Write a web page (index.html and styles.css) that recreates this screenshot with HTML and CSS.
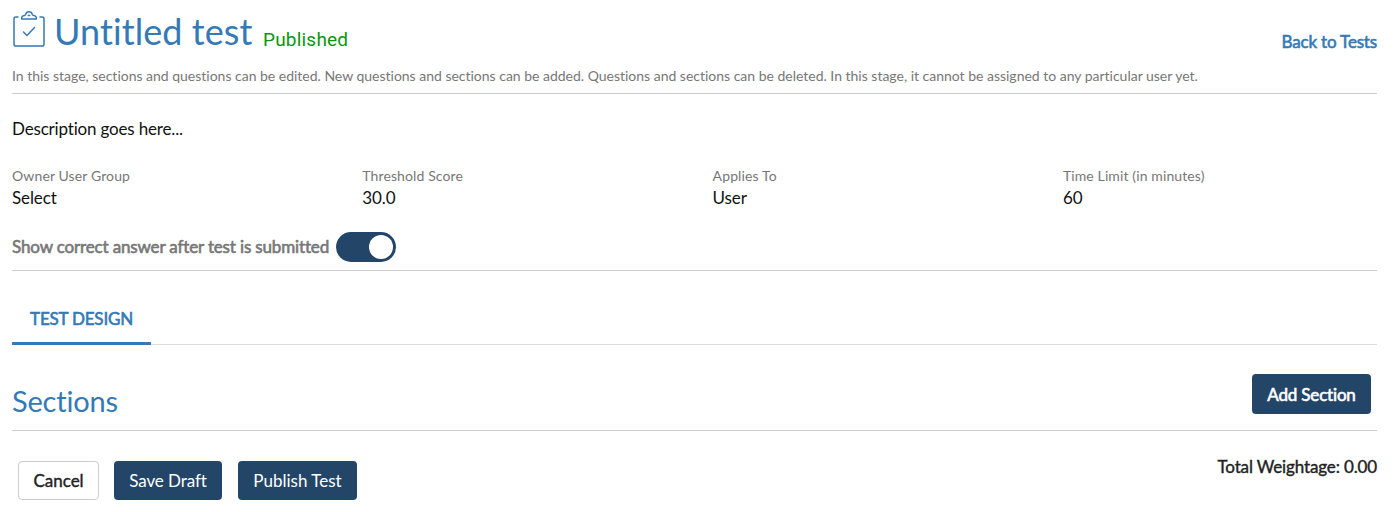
FILE: index.html
```html
<!DOCTYPE html>
<html lang="en">
<head>
<meta charset="utf-8">
<title>Untitled test</title>
<link rel="stylesheet" href="styles.css">
</head>
<body>
<header class="page-header">
  <div class="title-row">
    <svg class="clipboard" width="34" height="40" viewBox="0 0 34 40" fill="none" stroke="currentColor" stroke-width="1.5" stroke-linecap="round" stroke-linejoin="round">
      <path d="M6 7H3.8Q2 7 2 8.800V34.200Q2 36 3.800 36H30.200Q32 36 32 34.200V8.800Q32 7 30.200 7H28"/>
      <path d="M9.800 9H24.200Q25 6 21.500 5.400Q20.400 5.200 20.200 4.200C19.600 .8 14.400 .8 13.800 4.200Q13.600 5.200 12.500 5.400Q9 6 9.800 9Z"/>
      <path d="M16.400 5.500h1.200M11.500 22L15 25.500L22.500 17.500"/>
    </svg>
    <h1 class="title">Untitled test</h1>
    <span class="status">Published</span>
    <a class="back strong">Back to Tests</a>
  </div>
  <p class="note">In this stage, sections and questions can be edited. New questions and sections can be added. Questions and sections can be deleted. In this stage, it cannot be assigned to any particular user yet.</p>
</header>
<section class="details">
  <p class="description">Description goes here...</p>
  <dl class="fields">
    <div><dt>Owner User Group</dt><dd>Select</dd></div>
    <div><dt>Threshold Score</dt><dd>30.0</dd></div>
    <div><dt>Applies To</dt><dd>User</dd></div>
    <div><dt>Time Limit (in minutes)</dt><dd>60</dd></div>
  </dl>
  <div class="toggle-row">
    <span class="toggle-label strong">Show correct answer after test is submitted</span>
    <span class="toggle"><span class="knob"></span></span>
  </div>
</section>
<nav class="tabs"><a class="tab strong">TEST DESIGN</a></nav>
<section class="sections-head">
  <h2 class="heading">Sections</h2>
  <button class="btn primary add strong">Add Section</button>
</section>
<footer class="footer">
  <button class="btn cancel">Cancel</button>
  <button class="btn primary save">Save Draft</button>
  <button class="btn primary publish">Publish Test</button>
  <span class="total">Total Weightage: 0.00</span>
</footer>
</body>
</html>
```
FILE: styles.css
```css
* { box-sizing: border-box; }
body { margin: 0; padding: 0 18px 0 12px; background: #fff; color: #222; font: 17px/24px Lato, sans-serif; font-variant-ligatures: none; }
h1, h2, p, dl, dd { margin: 0; font-weight: 400; }
.strong { -webkit-text-stroke: .6px currentColor; }
.page-header { height: 94px; border-bottom: 1px solid #ccc; }
.title-row { display: flex; height: 66px; color: #337ab7; }
.clipboard { margin-top: 10px; flex: none; }
.title { width: 199px; margin: 8px 0 0 8px; font-size: 36px; line-height: 46px; white-space: nowrap; letter-spacing: .08px; }
.status { margin: 28px 0 0 10px; color: #0a970f; font: 19px/24px Roboto, sans-serif; letter-spacing: .2px; }
.back { margin: 30px 0 0 auto; letter-spacing: -.17px; }
.note { font-size: 14px; line-height: 20px; color: #777; white-space: nowrap; letter-spacing: -.01px; }
.details { height: 177px; padding-top: 23px; border-bottom: 1px solid #ccc; }
.description { height: 24px; color: #111; letter-spacing: -.17px; }
.fields { display: grid; grid-template-columns: repeat(4, 350.3px); padding-top: 25px; height: 68px; }
dt { font-size: 14px; line-height: 20px; color: #777; letter-spacing: .12px; }
dd { color: #111; letter-spacing: -.1px; }
.toggle-row { display: flex; align-items: center; margin-top: 23px; height: 30px; color: #777; }
.toggle-label { width: 317px; white-space: nowrap; letter-spacing: -.15px; }
.toggle { width: 60px; height: 30px; margin-left: 7px; padding: 3px; border-radius: 15px; background: #234668; display: flex; justify-content: flex-end; }
.knob { width: 24px; height: 24px; border-radius: 50%; background: #fff; }
.tabs { display: flex; align-items: flex-end; height: 74px; border-bottom: 1px solid #ddd; color: #337ab7; }
.tab { width: 139px; height: 40px; margin-bottom: -1px; padding-top: 2px; border-bottom: 3px solid #337ab7; text-align: center; letter-spacing: -.2px; }
.sections-head { display: flex; justify-content: space-between; height: 86px; padding: 29px 6px 0 0; border-bottom: 1px solid #ccc; }
.heading { margin-top: 9px; color: #337ab7; font-size: 29px; line-height: 36px; letter-spacing: -.2px; }
.btn { border: 0; border-radius: 4px; padding: 0; height: 39px; font: 17px/24px Lato, sans-serif; font-variant-ligatures: none; white-space: nowrap; }
.primary { background: #234668; color: #fff; }
.add { width: 119px; height: 40px; padding-top: 2px; letter-spacing: -.18px; }
.footer { display: flex; align-items: flex-start; padding: 30px 0 0 6px; }
.cancel { width: 81px; border: 1px solid #ccc; background: #fff; color: #222; -webkit-text-stroke: .4px #222; }
.save { width: 108px; margin-left: 15px; letter-spacing: -.08px; }
.publish { width: 119px; margin-left: 16px; }
.total { margin: -6px 0 0 auto; letter-spacing: -.14px; -webkit-text-stroke: .4px #222; }
```
